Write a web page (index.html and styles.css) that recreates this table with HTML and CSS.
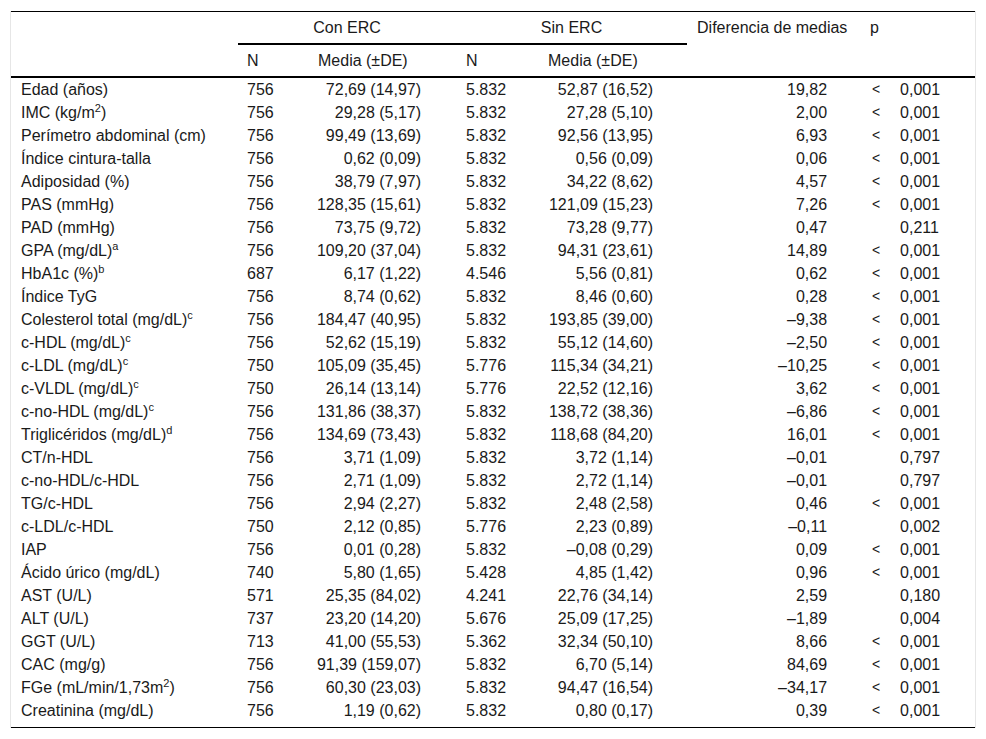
FILE: index.html
```html
<!DOCTYPE html>
<html lang="es">
<head>
<meta charset="utf-8">
<title>Tabla</title>
<link rel="stylesheet" href="styles.css">
</head>
<body>
<div class="wrap">
<table class="tbl">
<colgroup>
<col class="c1"><col class="c2"><col class="c3"><col class="c4"><col class="c5"><col class="c6"><col class="c7"><col class="c8">
</colgroup>
<thead>
<tr>
<th rowspan="2" class="rs"></th>
<th colspan="2" class="grp">Con ERC</th>
<th colspan="2" class="grp">Sin ERC</th>
<th rowspan="2" class="rs dif">Diferencia de medias</th>
<th rowspan="2" colspan="2" class="rs">p</th>
</tr>
<tr class="sub">
<th>N</th>
<th class="med1">Media (±DE)</th>
<th class="n2">N</th>
<th class="med2">Media (±DE)</th>
</tr>
</thead>
<tbody>
<tr><td>Edad (años)</td><td class="n">756</td><td class="m">72,69 (14,97)</td><td class="n n2">5.832</td><td class="m">52,87 (16,52)</td><td class="m">19,82</td><td class="lt">&lt;</td><td class="p">0,001</td></tr>
<tr><td>IMC (kg/m<sup>2</sup>)</td><td class="n">756</td><td class="m">29,28 (5,17)</td><td class="n n2">5.832</td><td class="m">27,28 (5,10)</td><td class="m">2,00</td><td class="lt">&lt;</td><td class="p">0,001</td></tr>
<tr><td>Perímetro abdominal (cm)</td><td class="n">756</td><td class="m">99,49 (13,69)</td><td class="n n2">5.832</td><td class="m">92,56 (13,95)</td><td class="m">6,93</td><td class="lt">&lt;</td><td class="p">0,001</td></tr>
<tr><td>Índice cintura-talla</td><td class="n">756</td><td class="m">0,62 (0,09)</td><td class="n n2">5.832</td><td class="m">0,56 (0,09)</td><td class="m">0,06</td><td class="lt">&lt;</td><td class="p">0,001</td></tr>
<tr><td>Adiposidad (%)</td><td class="n">756</td><td class="m">38,79 (7,97)</td><td class="n n2">5.832</td><td class="m">34,22 (8,62)</td><td class="m">4,57</td><td class="lt">&lt;</td><td class="p">0,001</td></tr>
<tr><td>PAS (mmHg)</td><td class="n">756</td><td class="m">128,35 (15,61)</td><td class="n n2">5.832</td><td class="m">121,09 (15,23)</td><td class="m">7,26</td><td class="lt">&lt;</td><td class="p">0,001</td></tr>
<tr><td>PAD (mmHg)</td><td class="n">756</td><td class="m">73,75 (9,72)</td><td class="n n2">5.832</td><td class="m">73,28 (9,77)</td><td class="m">0,47</td><td class="lt"></td><td class="p">0,211</td></tr>
<tr><td>GPA (mg/dL)<sup>a</sup></td><td class="n">756</td><td class="m">109,20 (37,04)</td><td class="n n2">5.832</td><td class="m">94,31 (23,61)</td><td class="m">14,89</td><td class="lt">&lt;</td><td class="p">0,001</td></tr>
<tr><td>HbA1c (%)<sup>b</sup></td><td class="n">687</td><td class="m">6,17 (1,22)</td><td class="n n2">4.546</td><td class="m">5,56 (0,81)</td><td class="m">0,62</td><td class="lt">&lt;</td><td class="p">0,001</td></tr>
<tr><td>Índice TyG</td><td class="n">756</td><td class="m">8,74 (0,62)</td><td class="n n2">5.832</td><td class="m">8,46 (0,60)</td><td class="m">0,28</td><td class="lt">&lt;</td><td class="p">0,001</td></tr>
<tr><td>Colesterol total (mg/dL)<sup>c</sup></td><td class="n">756</td><td class="m">184,47 (40,95)</td><td class="n n2">5.832</td><td class="m">193,85 (39,00)</td><td class="m">–9,38</td><td class="lt">&lt;</td><td class="p">0,001</td></tr>
<tr><td>c-HDL (mg/dL)<sup>c</sup></td><td class="n">756</td><td class="m">52,62 (15,19)</td><td class="n n2">5.832</td><td class="m">55,12 (14,60)</td><td class="m">–2,50</td><td class="lt">&lt;</td><td class="p">0,001</td></tr>
<tr><td>c-LDL (mg/dL)<sup>c</sup></td><td class="n">750</td><td class="m">105,09 (35,45)</td><td class="n n2">5.776</td><td class="m">115,34 (34,21)</td><td class="m">–10,25</td><td class="lt">&lt;</td><td class="p">0,001</td></tr>
<tr><td>c-VLDL (mg/dL)<sup>c</sup></td><td class="n">750</td><td class="m">26,14 (13,14)</td><td class="n n2">5.776</td><td class="m">22,52 (12,16)</td><td class="m">3,62</td><td class="lt">&lt;</td><td class="p">0,001</td></tr>
<tr><td>c-no-HDL (mg/dL)<sup>c</sup></td><td class="n">756</td><td class="m">131,86 (38,37)</td><td class="n n2">5.832</td><td class="m">138,72 (38,36)</td><td class="m">–6,86</td><td class="lt">&lt;</td><td class="p">0,001</td></tr>
<tr><td>Triglicéridos (mg/dL)<sup>d</sup></td><td class="n">756</td><td class="m">134,69 (73,43)</td><td class="n n2">5.832</td><td class="m">118,68 (84,20)</td><td class="m">16,01</td><td class="lt">&lt;</td><td class="p">0,001</td></tr>
<tr><td>CT/n-HDL</td><td class="n">756</td><td class="m">3,71 (1,09)</td><td class="n n2">5.832</td><td class="m">3,72 (1,14)</td><td class="m">–0,01</td><td class="lt"></td><td class="p">0,797</td></tr>
<tr><td>c-no-HDL/c-HDL</td><td class="n">756</td><td class="m">2,71 (1,09)</td><td class="n n2">5.832</td><td class="m">2,72 (1,14)</td><td class="m">–0,01</td><td class="lt"></td><td class="p">0,797</td></tr>
<tr><td>TG/c-HDL</td><td class="n">756</td><td class="m">2,94 (2,27)</td><td class="n n2">5.832</td><td class="m">2,48 (2,58)</td><td class="m">0,46</td><td class="lt">&lt;</td><td class="p">0,001</td></tr>
<tr><td>c-LDL/c-HDL</td><td class="n">750</td><td class="m">2,12 (0,85)</td><td class="n n2">5.776</td><td class="m">2,23 (0,89)</td><td class="m">–0,11</td><td class="lt"></td><td class="p">0,002</td></tr>
<tr><td>IAP</td><td class="n">756</td><td class="m">0,01 (0,28)</td><td class="n n2">5.832</td><td class="m">–0,08 (0,29)</td><td class="m">0,09</td><td class="lt">&lt;</td><td class="p">0,001</td></tr>
<tr><td>Ácido úrico (mg/dL)</td><td class="n">740</td><td class="m">5,80 (1,65)</td><td class="n n2">5.428</td><td class="m">4,85 (1,42)</td><td class="m">0,96</td><td class="lt">&lt;</td><td class="p">0,001</td></tr>
<tr><td>AST (U/L)</td><td class="n">571</td><td class="m">25,35 (84,02)</td><td class="n n2">4.241</td><td class="m">22,76 (34,14)</td><td class="m">2,59</td><td class="lt"></td><td class="p">0,180</td></tr>
<tr><td>ALT (U/L)</td><td class="n">737</td><td class="m">23,20 (14,20)</td><td class="n n2">5.676</td><td class="m">25,09 (17,25)</td><td class="m">–1,89</td><td class="lt"></td><td class="p">0,004</td></tr>
<tr><td>GGT (U/L)</td><td class="n">713</td><td class="m">41,00 (55,53)</td><td class="n n2">5.362</td><td class="m">32,34 (50,10)</td><td class="m">8,66</td><td class="lt">&lt;</td><td class="p">0,001</td></tr>
<tr><td>CAC (mg/g)</td><td class="n">756</td><td class="m">91,39 (159,07)</td><td class="n n2">5.832</td><td class="m">6,70 (5,14)</td><td class="m">84,69</td><td class="lt">&lt;</td><td class="p">0,001</td></tr>
<tr><td>FGe (mL/min/1,73m<sup>2</sup>)</td><td class="n">756</td><td class="m">60,30 (23,03)</td><td class="n n2">5.832</td><td class="m">94,47 (16,54)</td><td class="m">–34,17</td><td class="lt">&lt;</td><td class="p">0,001</td></tr>
<tr class="last"><td>Creatinina (mg/dL)</td><td class="n">756</td><td class="m">1,19 (0,62)</td><td class="n n2">5.832</td><td class="m">0,80 (0,17)</td><td class="m">0,39</td><td class="lt">&lt;</td><td class="p">0,001</td></tr>
</tbody>
</table>
</div>
</body>
</html>
```
FILE: styles.css
```css
html, body {
  margin: 0;
  padding: 0;
  background: #ffffff;
}

body {
  font-family: "Liberation Sans", Arial, sans-serif;
  font-size: 16px;
  color: #1a1a1a;
}

.wrap {
  margin: 11px 0 0 10px;
  width: 964px;
  border-left: 1px solid #e6e6e6;
  border-right: 1px solid #e6e6e6;
}

.tbl {
  width: 964px;
  table-layout: fixed;
  border-collapse: separate;
  border-spacing: 0;
  border-top: 1px solid #000;
  border-bottom: 1px solid #000;
}

.c1 { width: 227px; }
.c2 { width: 67px; }
.c3 { width: 151px; }
.c4 { width: 75px; }
.c5 { width: 156px; }
.c6 { width: 174px; }
.c7 { width: 30px; }
.c8 { width: 84px; }

th {
  font-weight: normal;
  line-height: 19px;
  padding: 6px 0 6px 9px;
  text-align: left;
  vertical-align: top;
  white-space: nowrap;
}

th.grp {
  text-align: center;
  padding-left: 0;
  border-bottom: 2px solid #000;
}

th.rs {
  border-bottom: 2px solid #000;
}

th.dif { padding-left: 10px; }

.sub th {
  border-bottom: 2px solid #000;
}

.sub th.n2 { padding-left: 10px; }
.sub th.med1 { padding-left: 13px; }
.sub th.med2 { padding-left: 17px; }

td {
  line-height: 19px;
  padding: 2px 0;
  white-space: nowrap;
  vertical-align: top;
}

td:first-child { padding-left: 10px; }

td.n { padding-left: 9px; }
td.n2 { padding-left: 10px; }

td.m {
  text-align: right;
  padding-right: 34px;
}

td:nth-child(3).m { padding-right: 35px; }

td.lt {
  padding-left: 11px;
  font-size: 14px;
}
td.p { padding-left: 9px; }

tr.last td { padding-bottom: 7px; }

sup {
  font-size: 11px;
  line-height: 0;
  vertical-align: 6px;
}
```
